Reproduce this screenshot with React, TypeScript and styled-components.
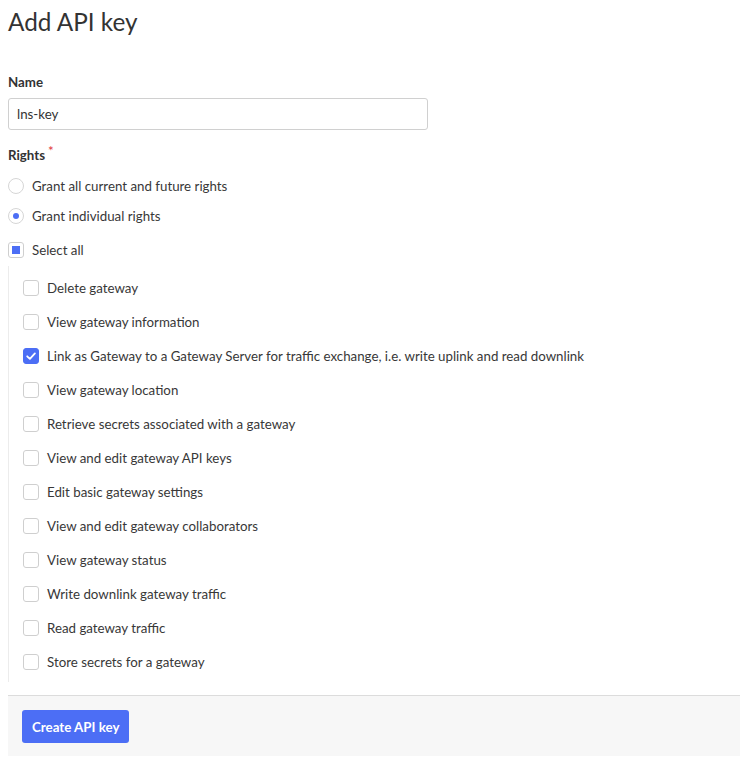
import React from 'react';
import styled, { createGlobalStyle } from 'styled-components';

const rights = [
  { label: 'Delete gateway', checked: false },
  { label: 'View gateway information', checked: false },
  { label: 'Link as Gateway to a Gateway Server for traffic exchange, i.e. write uplink and read downlink', checked: true },
  { label: 'View gateway location', checked: false },
  { label: 'Retrieve secrets associated with a gateway', checked: false },
  { label: 'View and edit gateway API keys', checked: false },
  { label: 'Edit basic gateway settings', checked: false },
  { label: 'View and edit gateway collaborators', checked: false },
  { label: 'View gateway status', checked: false },
  { label: 'Write downlink gateway traffic', checked: false },
  { label: 'Read gateway traffic', checked: false },
  { label: 'Store secrets for a gateway', checked: false },
];

const GlobalStyle = createGlobalStyle`
  body {
    margin: 0;
    background: #ffffff;
    font-family: Lato, 'Open Sans', sans-serif;
    color: #333333;
  }
`;

const App = () => {
  return (
    <Page>
      <GlobalStyle />
      <Title>Add API key</Title>
      <Label>Name</Label>
      <Input defaultValue="lns-key" />
      <Label top="15px">
        Rights<Required>*</Required>
      </Label>
      <Options>
        <OptionRow>
          <Radio />
          <OptionText>Grant all current and future rights</OptionText>
        </OptionRow>
        <OptionRow>
          <Radio selected />
          <OptionText>Grant individual rights</OptionText>
        </OptionRow>
        <SelectAllRow>
          <Box indeterminate />
          <OptionText>Select all</OptionText>
        </SelectAllRow>
      </Options>
      <RightsGroup>
        {rights.map(r => (
          <RightRow key={r.label}>
            <Box checked={r.checked}>
              {r.checked && (
                <svg width="12" height="12" viewBox="0 0 12 12">
                  <path d="M2.2 6.3 L4.9 8.9 L9.9 3.4" fill="none" stroke="#ffffff" strokeWidth="1.8" strokeLinecap="round" strokeLinejoin="round" />
                </svg>
              )}
            </Box>
            <OptionText>{r.label}</OptionText>
          </RightRow>
        ))}
      </RightsGroup>
      <Footer>
        <SubmitButton>Create API key</SubmitButton>
      </Footer>
    </Page>
  );
};

const Page = styled.div`
  width: 732px;
  padding: 0 8px;
  display: flex;
  flex-direction: column;
`;

const Title = styled.h1`
  margin: 0;
  font-size: 24.3px;
  font-weight: 400;
  line-height: 44px;
  color: #333333;
`;

const Label = styled.div<{ top?: string }>`
  margin-top: ${props => props.top || '28px'};
  font-size: 13.3px;
  font-weight: 700;
  line-height: 20px;
  color: #333333;
`;

const Required = styled.span`
  color: #e0333a;
  font-weight: 400;
  margin-left: 3px;
  position: relative;
  top: -4px;
`;

const Input = styled.input`
  margin-top: 6px;
  width: 420px;
  height: 32px;
  box-sizing: border-box;
  border: 1px solid #d0d0d0;
  border-radius: 3px;
  padding: 0 8px;
  font-family: inherit;
  font-size: 13.3px;
  color: #333333;
  outline: none;
`;

const Options = styled.div`
  margin-top: 6px;
  display: flex;
  flex-direction: column;
`;

const OptionRow = styled.div`
  height: 30px;
  display: flex;
  align-items: center;
  gap: 8px;
`;

const SelectAllRow = styled(OptionRow)`
  margin-top: 4px;
`;

const OptionText = styled.span`
  font-size: 13.3px;
  color: #383838;
`;

const Radio = styled.span<{ selected?: boolean }>`
  width: 16px;
  height: 16px;
  box-sizing: border-box;
  border: 1px solid #d6d6d6;
  border-radius: 50%;
  display: flex;
  align-items: center;
  justify-content: center;

  &::after {
    content: '';
    width: 6px;
    height: 6px;
    border-radius: 50%;
    background: ${props => (props.selected ? '#4c6ef5' : 'transparent')};
  }
`;

const Box = styled.span<{ checked?: boolean; indeterminate?: boolean }>`
  width: 16px;
  height: 16px;
  flex-shrink: 0;
  box-sizing: border-box;
  border: 1px solid ${props => (props.checked ? '#4c6ef5' : '#cfcfcf')};
  border-radius: 3px;
  background: ${props => (props.checked ? '#4c6ef5' : '#ffffff')};
  display: flex;
  align-items: center;
  justify-content: center;

  &::after {
    content: '';
    display: ${props => (props.indeterminate ? 'block' : 'none')};
    width: 8px;
    height: 8px;
    background: #4c6ef5;
  }
`;

const RightsGroup = styled.div`
  margin-top: 1px;
  padding: 5px 0 3px 14px;
  border-left: 1px solid #ececec;
  display: flex;
  flex-direction: column;
`;

const RightRow = styled.div`
  height: 34px;
  display: flex;
  align-items: center;
  gap: 8px;
`;

const Footer = styled.div`
  margin-top: 13px;
  border-top: 1px solid #dcdcdc;
  background: #f7f7f7;
  padding: 14px 14px 13px;
  display: flex;
`;

const SubmitButton = styled.button`
  height: 33px;
  padding: 0 10px;
  border: none;
  border-radius: 3px;
  background: #4c6ef5;
  color: #ffffff;
  font-family: inherit;
  font-size: 13.3px;
  font-weight: 700;
  cursor: pointer;
`;

export default App;
